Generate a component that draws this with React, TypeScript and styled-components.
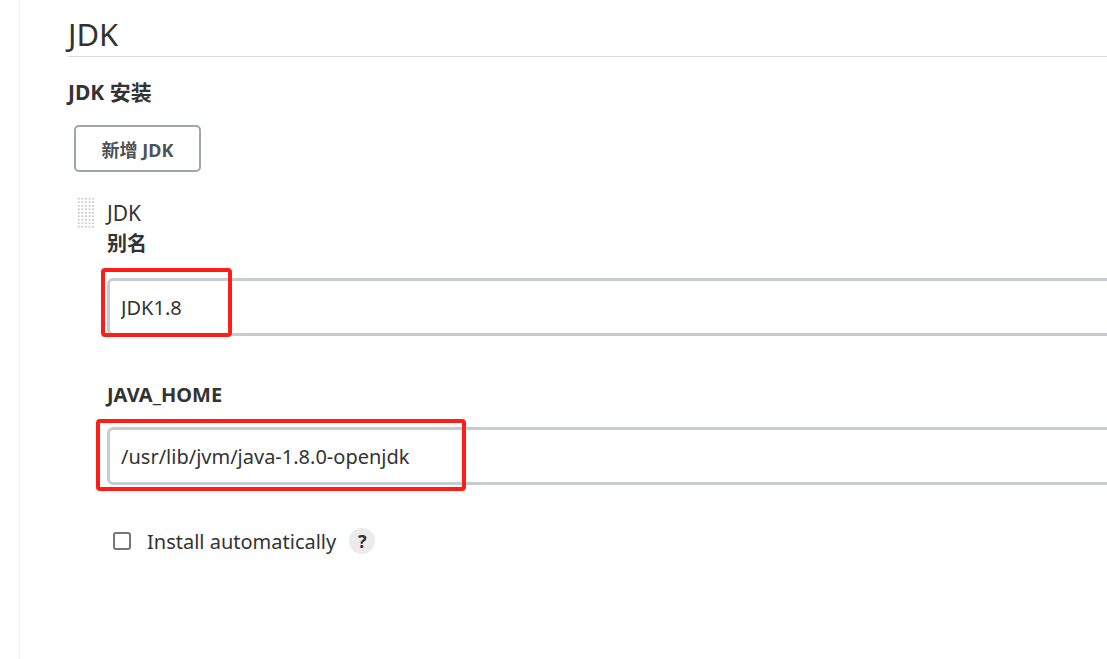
import React from "react";
import styled, { createGlobalStyle } from "styled-components";

const Global = createGlobalStyle`
  html, body { margin: 0; padding: 0; background: #fff; overflow: hidden; }
  body { font-family: "Noto Sans", "Noto Sans CJK SC", sans-serif; color: #333; }
`;

const Page = styled.div`
  display: flex;
  width: 1107px;
  height: 659px;
  overflow: hidden;
`;

const Sidebar = styled.div`
  flex: 0 0 19px;
  border-right: 1px solid #efefef;
`;

const Main = styled.main`
  flex: 1;
  min-width: 0;
  padding: 16px 0 0 48px;
`;

const Title = styled.h1`
  margin: 0;
  font-size: 31px;
  font-weight: 400;
  line-height: 36px;
  padding-bottom: 4px;
  border-bottom: 1px solid #dcdcdc;
  color: #333;
`;

const SectionTitle = styled.h2`
  margin: 23px 0 0;
  font-size: 21px;
  font-weight: 700;
  line-height: 24px;
  color: #333;
`;

const AddButton = styled.button`
  margin: 21px 0 0 6px;
  width: 127px;
  height: 47px;
  border: 2px solid #9ba6ae;
  border-radius: 5px;
  background: #fff;
  font-family: inherit;
  font-size: 18px;
  font-weight: 700;
  color: #4b525a;
  cursor: pointer;
`;

const Item = styled.div`
  display: flex;
  margin: 25px 0 0 9px;
  gap: 12px;
`;

const Handle = styled.div`
  flex: 0 0 18px;
  height: 31px;
  background-image: radial-gradient(circle, #c9c9c9 0.9px, transparent 1.3px);
  background-size: 3.6px 3.5px;
`;

const ItemBody = styled.div`
  flex: 1;
  min-width: 0;
`;

const ItemName = styled.div`
  padding-top: 2px;
  font-size: 21px;
  line-height: 28px;
  color: #333;
`;

const FieldLabel = styled.div<{ $gap: number }>`
  margin-top: ${(p) => p.$gap}px;
  font-size: 20px;
  font-weight: 700;
  line-height: 28px;
  color: #333;
`;

const Field = styled.div<{ $gap: number }>`
  position: relative;
  margin-top: ${(p) => p.$gap}px;
  width: calc(100% + 40px);
`;

const TextInput = styled.input`
  box-sizing: border-box;
  display: block;
  width: 100%;
  height: 58px;
  border: 3px solid #c5cdd2;
  border-radius: 6px;
  padding: 0 11px;
  font-family: inherit;
  font-size: 20px;
  color: #333;
  background: #fff;
  outline: none;
`;

const Highlight = styled.div<{ $l: number; $t: number; $w: number; $h: number }>`
  position: absolute;
  left: ${(p) => p.$l}px;
  top: ${(p) => p.$t}px;
  width: ${(p) => p.$w}px;
  height: ${(p) => p.$h}px;
  box-sizing: border-box;
  border: 4px solid #fd1f17;
  border-radius: 4px;
  pointer-events: none;
`;

const CheckRow = styled.label`
  display: flex;
  align-items: center;
  margin: 42px 0 0 6px;
  height: 28px;
  font-size: 20px;
  color: #333;
`;

const Check = styled.span`
  box-sizing: border-box;
  width: 18px;
  height: 18px;
  border: 2px solid #767676;
  border-radius: 3px;
  background: #fff;
  margin-right: 16px;
`;

const Help = styled.span`
  display: inline-flex;
  align-items: center;
  justify-content: center;
  width: 26px;
  height: 26px;
  margin-left: 13px;
  border-radius: 50%;
  background: #ebebeb;
  font-size: 18px;
  font-weight: 700;
  color: #333;
`;

export default function App() {
  return (
    <>
      <Global />
      <Page>
        <Sidebar />
        <Main>
          <Title>JDK</Title>
          <SectionTitle>JDK 安装</SectionTitle>
          <AddButton type="button">新增 JDK</AddButton>
          <Item>
            <Handle />
            <ItemBody>
              <ItemName>JDK</ItemName>
              <FieldLabel $gap={3}>别名</FieldLabel>
              <Field $gap={20}>
                <TextInput defaultValue="JDK1.8" />
                <Highlight $l={-6} $t={-10} $w={131} $h={69} />
              </Field>
              <FieldLabel $gap={45}>JAVA_HOME</FieldLabel>
              <Field $gap={18}>
                <TextInput defaultValue="/usr/lib/jvm/java-1.8.0-openjdk" />
                <Highlight $l={-11} $t={-8} $w={370} $h={72} />
              </Field>
              <CheckRow>
                <Check />
                Install automatically
                <Help>?</Help>
              </CheckRow>
            </ItemBody>
          </Item>
        </Main>
      </Page>
    </>
  );
}
